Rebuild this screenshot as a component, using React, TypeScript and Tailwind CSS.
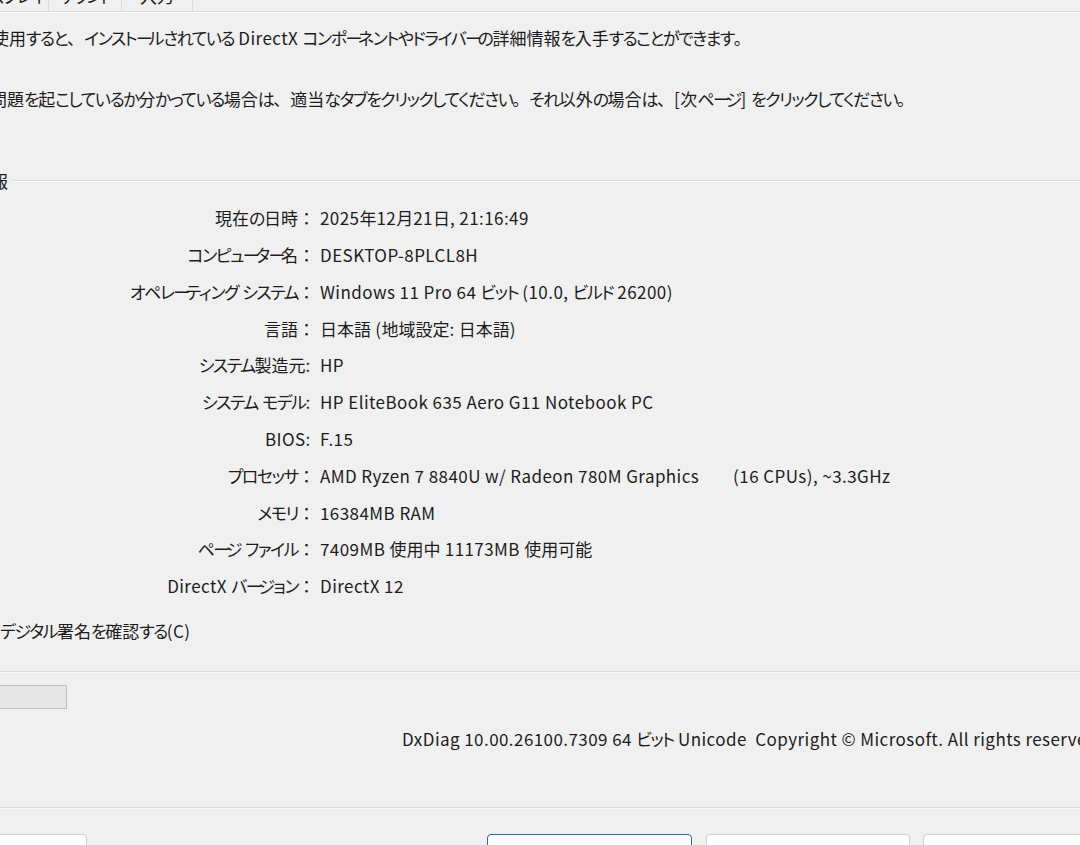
import React from "react";

const rows: [string, string][] = [
  ["現在の日時：", "2025年12月21日, 21:16:49"],
  ["コンピューター名：", "DESKTOP-8PLCL8H"],
  ["オペレーティング システム：", "Windows 11 Pro 64 ビット (10.0, ビルド 26200)"],
  ["言語：", "日本語 (地域設定: 日本語)"],
  ["システム製造元:\u00a0", "HP"],
  ["システム モデル:\u00a0", "HP EliteBook 635 Aero G11 Notebook PC"],
  ["BIOS:\u00a0", "F.15"],
  ["プロセッサ：", "AMD Ryzen 7 8840U w/ Radeon 780M Graphics\u00a0\u00a0\u00a0\u00a0\u00a0\u00a0\u00a0\u00a0(16 CPUs), ~3.3GHz"],
  ["メモリ：", "16384MB RAM"],
  ["ページ ファイル：", "7409MB 使用中 11173MB 使用可能"],
  ["DirectX バージョン：", "DirectX 12"],
];

const SPLIT = /([\u3400-\u9fff]+|\u30fc+|[\u3040-\u30fb\u30fd-\u30ff]+|[\u3000-\u303f\uff00-\uffef]+)/;
const KANJI = /^[\u3400-\u9fff]+$/;
const CHOON = /^\u30fc+$/;
const KANA = /^[\u3040-\u30fb\u30fd-\u30ff]+$/;
const PUNCT = /^[\u3000-\u303f\uff00-\uffef]+$/;

function T({ s }: { s: string }) {
  const parts = s.split(SPLIT).filter((p) => p.length > 0);
  return (
    <>
      {parts.map((p, i) => {
        if (KANJI.test(p)) return <span key={i}>{p}</span>;
        if (CHOON.test(p))
          return (
            <span key={i} className="tracking-[-4.4px]">
              {p}
            </span>
          );
        if (KANA.test(p))
          return (
            <span key={i} className="tracking-[-1.5px]">
              {p}
            </span>
          );
        if (PUNCT.test(p))
          return (
            <span key={i} className="[font-feature-settings:normal]">
              {p}
            </span>
          );
        return (
          <span key={i} className="tracking-[0.43px]">
            {p}
          </span>
        );
      })}
    </>
  );
}

function Sep() {
  return (
    <div className="h-[2px] border-t border-[#dcdcdc] border-b border-b-[#fafafa]" />
  );
}

export default function App() {
  return (
    <div className="w-[1080px] h-[845px] overflow-hidden bg-[#f0f0f0] text-[#1c1c1c] font-['Noto_Sans_CJK_JP','Noto_Sans',sans-serif] text-[17px] [font-feature-settings:'palt'] whitespace-nowrap">
      {/* tab strip */}
      <div className="flex h-[30px] mt-[-19px] leading-[30px]">
        <div className="w-[89px] ml-[-40px] shrink-0 text-center border-r border-[#dcdcdc]"><T s="ディスプレイ" /></div>
        <div className="w-[73px] shrink-0 text-center border-r border-[#dcdcdc]"><T s="サウンド" /></div>
        <div className="w-[71px] shrink-0 text-center border-r border-[#dcdcdc]"><T s="入力" /></div>
        <div className="flex-1" />
      </div>
      <Sep />

      {/* intro */}
      <p className="leading-[24px] mt-[13px] ml-[-8px]">
        <T s="使用すると、インストールされている DirectX コンポーネントやドライバーの詳細情報を入手することができます。" />
      </p>
      <p className="leading-[24px] mt-[37px] ml-[-10px]">
        <T s="問題を起こしているか分かっている場合は、適当なタブをクリックしてください。それ以外の場合は、[次ページ] をクリックしてください。" />
      </p>

      {/* group header */}
      <div className="flex items-center h-[24px] mt-[58px]">
        <div className="w-[8px] shrink-0 flex justify-end leading-[24px]">
          <span><T s="システム情報" /></span>
        </div>
        <div className="flex-1 ml-[4px]">
          <Sep />
        </div>
      </div>

      {/* info rows */}
      <div className="mt-[6.6px] flex flex-col">
        {rows.map(([k, v]) => (
          <div key={k} className="flex items-center h-[36.8px]">
            <div className="w-[315px] shrink-0 text-right"><T s={k} /></div>
            <div className="ml-[5px]"><T s={v} /></div>
          </div>
        ))}
      </div>

      {/* checkbox text */}
      <div className="leading-[24px] mt-[14.6px]"><T s="デジタル署名を確認する(C)" /></div>

      <div className="mt-[28px]">
        <Sep />
      </div>

      {/* progress bar */}
      <div className="mt-[12px] ml-[-100px] w-[167px] h-[24px] bg-[#e6e6e6] border border-[#bcbcbc]" />

      {/* version */}
      <div className="leading-[24px] mt-[18px] ml-[402px]">
        <T s={"DxDiag 10.00.26100.7309 64 ビット Unicode\u00a0 Copyright © Microsoft. All rights reserved."} />
      </div>

      <div className="mt-[56px]">
        <Sep />
      </div>

      {/* buttons */}
      <div className="flex mt-[25px]">
        <div className="w-[205px] h-[40px] ml-[-118px] shrink-0 bg-[#fdfdfd] border border-[#cfcfcf] rounded-[4px] flex items-center justify-center"><T s="ヘルプ(H)" /></div>
        <div className="w-[205px] h-[40px] ml-[400px] shrink-0 bg-[#fdfdfd] border border-[#2f6a9a] rounded-[4px] flex items-center justify-center"><T s="次ページ(N)" /></div>
        <div className="w-[204px] h-[40px] ml-[14px] shrink-0 bg-[#fdfdfd] border border-[#cfcfcf] rounded-[4px] flex items-center justify-center"><T s="情報をすべて保存(S)..." /></div>
        <div className="w-[205px] h-[40px] ml-[13px] shrink-0 bg-[#fdfdfd] border border-[#cfcfcf] rounded-[4px] flex items-center justify-center"><T s="終了(X)" /></div>
      </div>
    </div>
  );
}
